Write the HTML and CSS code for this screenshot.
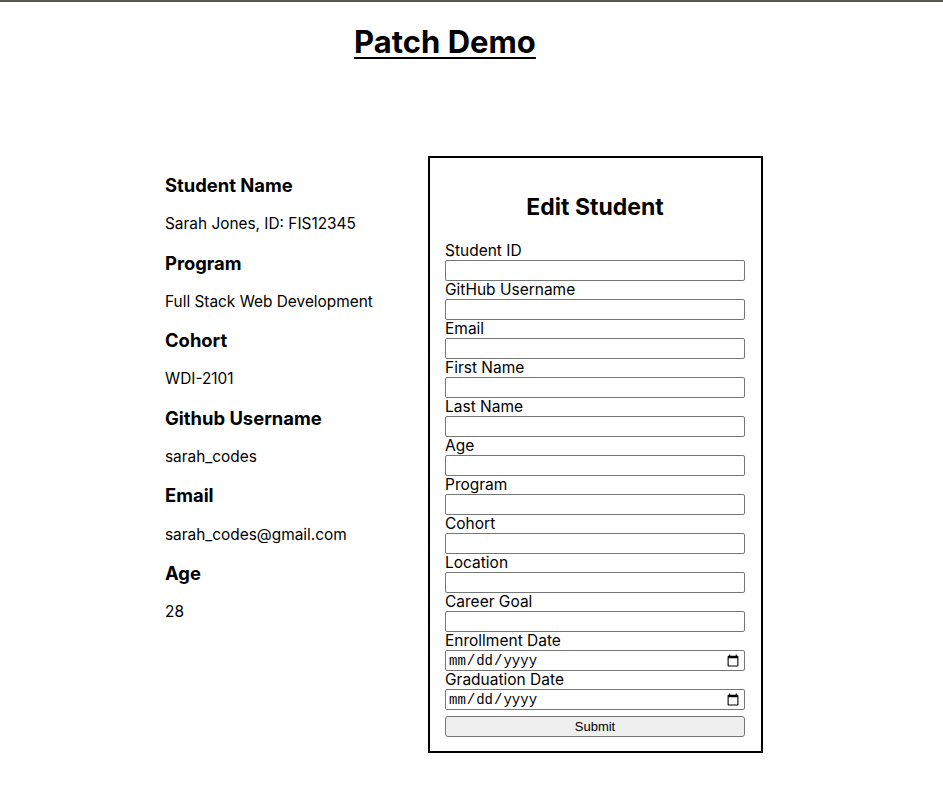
FILE: index.html
```html
<!DOCTYPE html>
<html lang="en">
<head>
  <meta charset="UTF-8" />
  <meta name="viewport" content="width=device-width, initial-scale=1.0"/>
  <title>Patch Demo</title>
  <link rel="stylesheet" href="styles.css">
</head>
<body>
  <div class="page">
    <h1 class="title">Patch Demo</h1>

    <div class="content">
      <div class="details">
        <h3>Student Name</h3>
        <p>Sarah Jones, ID: FIS12345</p>
        <h3>Program</h3>
        <p>Full Stack Web Development</p>
        <h3>Cohort</h3>
        <p>WDI-2101</p>
        <h3>Github Username</h3>
        <p>sarah_codes</p>
        <h3>Email</h3>
        <p>sarah_codes@gmail.com</p>
        <h3>Age</h3>
        <p>28</p>
      </div>

      <form class="edit-form">
        <h2>Edit Student</h2>
        <label>Student ID</label>
        <input type="text">
        <label>GitHub Username</label>
        <input type="text">
        <label>Email</label>
        <input type="text">
        <label>First Name</label>
        <input type="text">
        <label>Last Name</label>
        <input type="text">
        <label>Age</label>
        <input type="text">
        <label>Program</label>
        <input type="text">
        <label>Cohort</label>
        <input type="text">
        <label>Location</label>
        <input type="text">
        <label>Career Goal</label>
        <input type="text">
        <label>Enrollment Date</label>
        <input type="date">
        <label>Graduation Date</label>
        <input type="date">
        <button type="button">Submit</button>
      </form>
    </div>
  </div>
</body>
</html>
```

FILE: styles.css
```css
html {
  border-top: 2px solid #55584a;
}

body {
  margin: 0 8px;
  font-family: Inter, 'Noto Sans', sans-serif;
  color: #000;
  background: #fff;
}

.page {
  width: 874px;
}

.title {
  margin: 22px 0 0;
  text-align: center;
  font-size: 31px;
  line-height: 36px;
  font-weight: 700;
  text-decoration: underline;
  text-underline-offset: 4px;
  text-decoration-thickness: 2px;
}

.content {
  display: flex;
  align-items: flex-start;
  gap: 55px;
  margin-top: 96px;
  padding-left: 157px;
}

.details {
  width: 208px;
  padding-top: 18px;
}

.details h3 {
  margin: 18.3px 0;
  font-size: 18.4px;
  line-height: 22px;
  font-weight: 700;
}

.details h3:first-child {
  margin-top: 0;
}

.details p {
  margin: 0;
  font-size: 15.4px;
  line-height: 19px;
}

.edit-form {
  width: 300px;
  border: 2px solid #000;
  padding: 15px 16px 14px 15px;
  display: flex;
  flex-direction: column;
}

.edit-form h2 {
  margin: 21px 0 21px;
  text-align: center;
  font-size: 23px;
  line-height: 27px;
  font-weight: 700;
}

.edit-form label {
  font-size: 15.5px;
  line-height: 18px;
}

.edit-form input {
  box-sizing: border-box;
  width: 300px;
  height: 21px;
  margin: 0;
  border: 1px solid #767676;
  border-radius: 2px;
  padding: 1px 2px;
  font-size: 13px;
}

.edit-form input[type="date"] {
  font-family: 'Liberation Mono', monospace;
  font-size: 14px;
}

.edit-form button {
  box-sizing: border-box;
  width: 300px;
  height: 21px;
  margin-top: 6px;
  background: #efefef;
  border: 1px solid #767676;
  border-radius: 3px;
  font-family: 'Liberation Sans', Arial, sans-serif;
  font-size: 13px;
  color: #000;
}
```
